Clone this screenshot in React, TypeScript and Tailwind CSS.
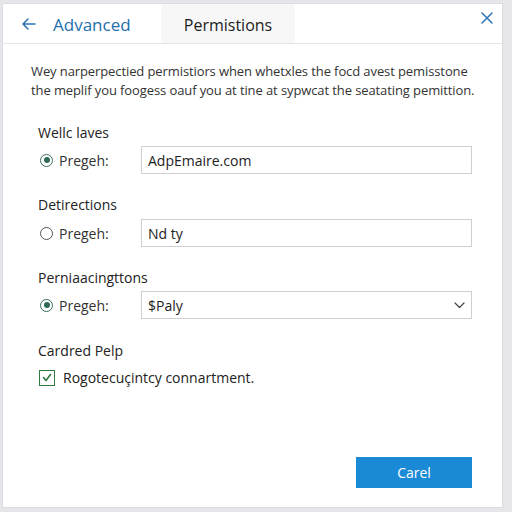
import React from "react";

export default function App() {
  return (
    <div className="w-[512px] h-[512px] bg-[#e6e6ea] pt-[3px] pl-[2px] overflow-hidden" style={{ fontFamily: '"Open Sans", "Noto Sans", sans-serif' }}>
      <div className="w-[501px] h-[505px] bg-white border border-[#dcdce0] flex flex-col">
        {/* Header */}
        <div className="h-[40px] flex items-stretch border-b border-[#e6e6e8] relative">
          <div className="w-[50px] flex items-center justify-center pl-[2px]">
            <svg width="16" height="14" viewBox="0 0 16 14" fill="none" stroke="#2a75b5" strokeWidth="1.5" strokeLinecap="round" strokeLinejoin="round">
              <path d="M14 7H2M7 2L2 7l5 5" />
            </svg>
          </div>
          <div className="flex items-center text-[17px] text-[#2370ad] w-[108px] pt-[2px]">Advanced</div>
          <div className="flex items-center justify-center w-[134px] bg-[#f7f7f8] text-[16px] text-[#1c1c1c] pt-[2px]">Permistions</div>
          <div className="absolute right-[9px] top-[8px]">
            <svg width="12" height="12" viewBox="0 0 12 12" fill="none" stroke="#2a75b5" strokeWidth="1.5" strokeLinecap="round">
              <path d="M1 1l10 10M11 1L1 11" />
            </svg>
          </div>
        </div>

        {/* Body */}
        <div className="flex flex-col pl-[28px] pr-[30px] pt-[18px] text-[#2b2b2b]">
          <p className="text-[13px] leading-[19px] text-[#333] whitespace-nowrap tracking-[-0.1px]">
            Wey narperpectied permistiors when whetxles the focd avest pemisstone
            <br />
            the meplif you foogess oauf you at tine at sypwcat the seatating pemittion.
          </p>

          <div className="mt-[24px] ml-[7px] text-[14px] leading-[18px] text-[#222]">Wellc laves</div>
          <div className="mt-[4px] flex items-center h-[28px]">
            <div className="w-[110px] flex items-center pl-[9px] gap-[6px] text-[14px] text-[#333]">
              <span className="w-[13px] h-[13px] rounded-full border border-[#3a6e5a] flex items-center justify-center">
                <span className="w-[6px] h-[6px] rounded-full bg-[#2e6b57]" />
              </span>
              Pregeh:
            </div>
            <div className="flex-1 h-[28px] border border-[#cfcfd2] flex items-center px-[6px] text-[14px] text-[#222]">AdpEmaire.com</div>
          </div>

          <div className="mt-[22px] ml-[7px] text-[14px] leading-[18px] text-[#222]">Detirections</div>
          <div className="mt-[5px] flex items-center h-[28px]">
            <div className="w-[110px] flex items-center pl-[9px] gap-[6px] text-[14px] text-[#333]">
              <span className="w-[13px] h-[13px] rounded-full border border-[#555]" />
              Pregeh:
            </div>
            <div className="flex-1 h-[28px] border border-[#cfcfd2] flex items-center px-[6px] text-[14px] text-[#222]">Nd ty</div>
          </div>

          <div className="mt-[22px] ml-[7px] text-[14px] leading-[18px] text-[#222]">Perniaacingttons</div>
          <div className="mt-[4px] flex items-center h-[28px]">
            <div className="w-[110px] flex items-center pl-[9px] gap-[6px] text-[14px] text-[#333]">
              <span className="w-[13px] h-[13px] rounded-full border border-[#3a6e5a] flex items-center justify-center">
                <span className="w-[6px] h-[6px] rounded-full bg-[#2e6b57]" />
              </span>
              Pregeh:
            </div>
            <div className="flex-1 h-[28px] border border-[#cfcfd2] flex items-center justify-between px-[6px] text-[14px] text-[#222]">
              <span>$Paly</span>
              <svg width="11" height="7" viewBox="0 0 11 7" fill="none" stroke="#444" strokeWidth="1.2" strokeLinecap="round" strokeLinejoin="round">
                <path d="M1 1l4.5 4.5L10 1" />
              </svg>
            </div>
          </div>

          <div className="mt-[23px] ml-[7px] text-[14px] leading-[18px] text-[#222]">Cardred Pelp</div>
          <div className="mt-[7px] ml-[8px] flex items-center gap-[8px] text-[14px] text-[#222]">
            <span className="w-[16px] h-[16px] border border-[#2f7a3e] flex items-center justify-center">
              <svg width="10" height="9" viewBox="0 0 10 9" fill="none" stroke="#2f7a3e" strokeWidth="1.6" strokeLinecap="round" strokeLinejoin="round">
                <path d="M1.5 4.5l2.5 3L8.5 1.5" />
              </svg>
            </span>
            Rogotecuçintcy connartment.
          </div>
        </div>

        <div className="flex-1" />
        <div className="flex justify-end pr-[30px] pb-[19px]">
          <button className="w-[116px] h-[31px] bg-[#1a8ad6] text-white text-[14px] flex items-center justify-center">Carel</button>
        </div>
      </div>
    </div>
  );
}
